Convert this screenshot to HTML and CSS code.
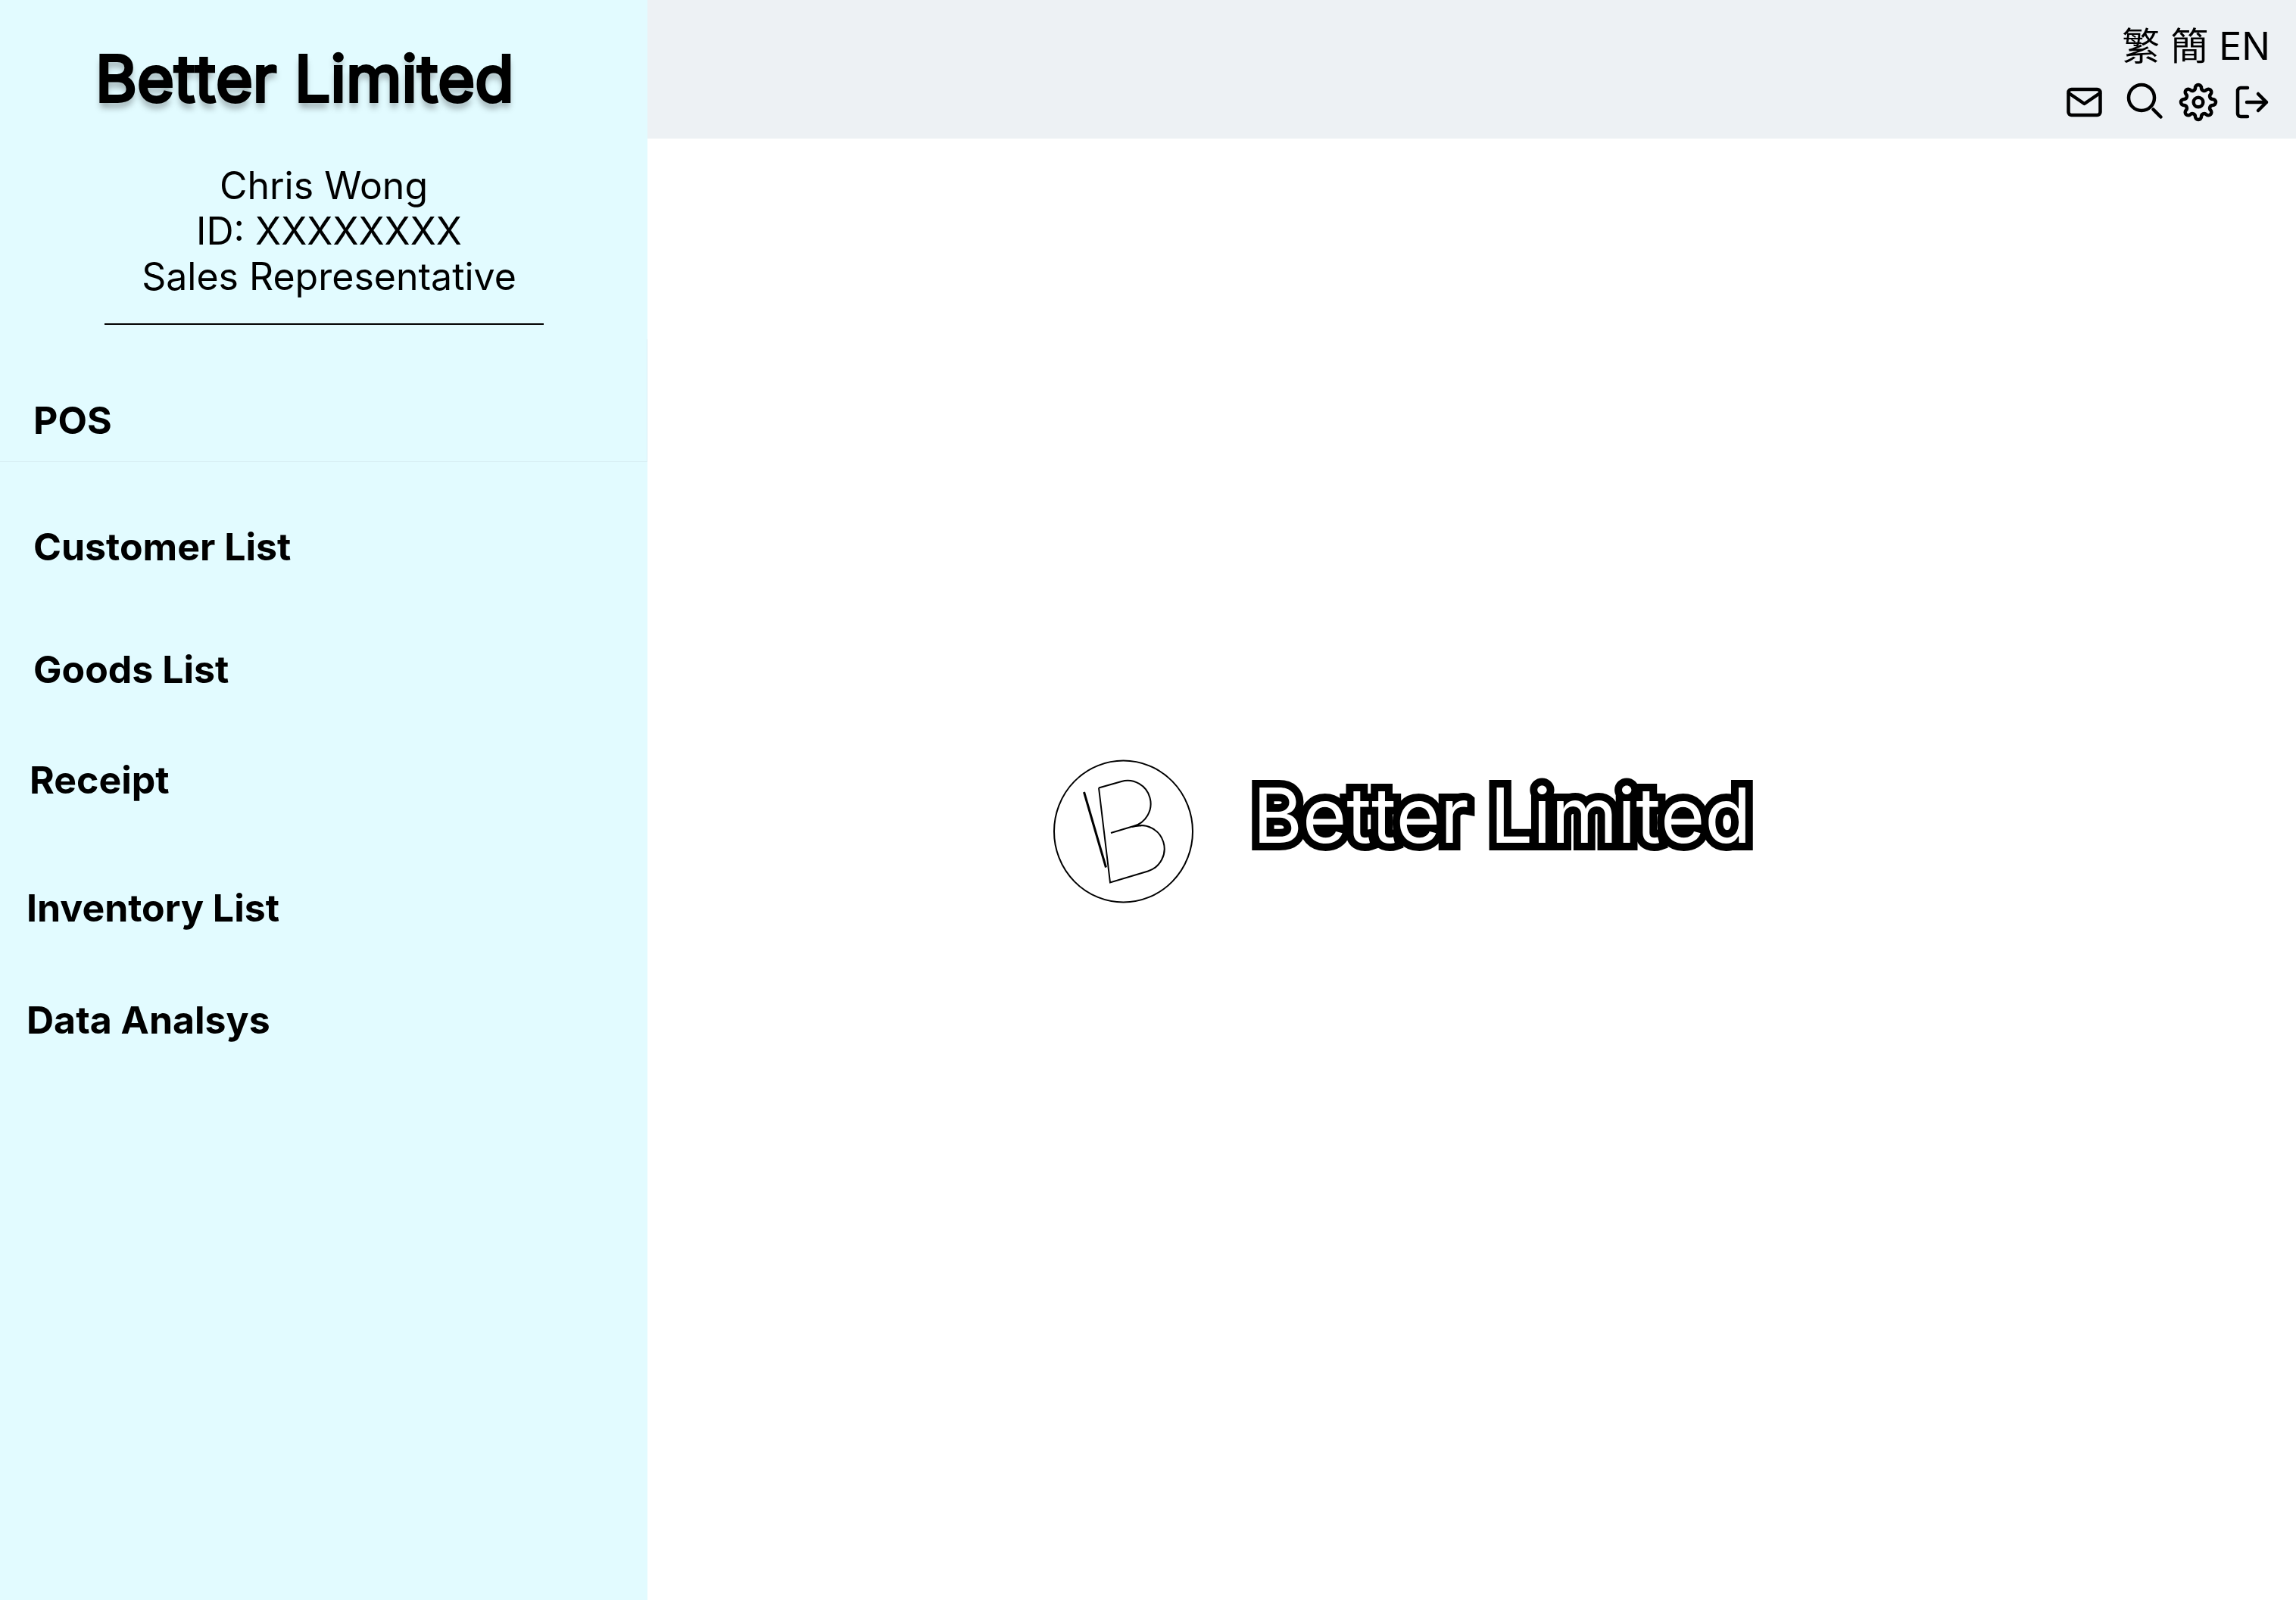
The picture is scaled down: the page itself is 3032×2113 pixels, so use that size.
FILE: index.html
```html
<!DOCTYPE html>
<html lang="en">
<head>
<meta charset="utf-8">
<title>Better Limited</title>
<link rel="stylesheet" href="styles.css">
</head>
<body>
<div class="app">
  <aside class="sidebar">
    <h1 class="brand">Better Limited</h1>
    <p class="profile">Chris Wong<br>&nbsp;ID: XXXXXXXX<br>&nbsp;Sales Representative</p>
    <hr class="divider">
    <nav class="menu" aria-label="Main">
      <a class="menu-item is-active" href="#pos">POS</a>
      <a class="menu-item" href="#customers">Customer List</a>
      <a class="menu-item" href="#goods">Goods List</a>
      <a class="menu-item menu-item-mid" href="#receipt">Receipt</a>
      <a class="menu-item menu-item-low" href="#inventory">Inventory List</a>
      <a class="menu-item menu-item-low" href="#data">Data Analsys</a>
    </nav>
  </aside>
  <div class="page">
    <header class="topbar">
      <div class="languages">
        <a href="#zh-hant" lang="zh-Hant">繁</a>
        <a href="#zh-hans" lang="zh-Hant">簡</a>
        <a href="#en">EN</a>
      </div>
      <div class="tools">
        <button class="tool tool-wide" type="button" aria-label="Mail">
          <svg viewBox="0 0 56 50" stroke-width="4.500"><rect x="5.500" y="8" width="42" height="34" rx="4"/><path d="M6 13 26.500 27 47 13"/></svg>
        </button>
        <button class="tool" type="button" aria-label="Search">
          <svg viewBox="0 0 48 50" stroke-width="4.500"><circle cx="22" cy="19" r="17"/><path d="M37.500 34.500 47.500 44.500"/></svg>
        </button>
        <button class="tool" type="button" aria-label="Settings">
          <svg viewBox="0 0 48 50" stroke-width="4.500">
            <g transform="translate(25 25)">
              <circle r="6.300"/>
              <path d="M-4-19A4 4 0 0 1 4-19A3.870 3.870 0 0 0 10.610-16.260A4 4 0 0 1 16.260-10.610A3.870 3.870 0 0 0 19-4A4 4 0 0 1 19 4A3.870 3.870 0 0 0 16.260 10.610A4 4 0 0 1 10.610 16.260A3.870 3.870 0 0 0 4 19A4 4 0 0 1-4 19A3.870 3.870 0 0 0-10.610 16.260A4 4 0 0 1-16.260 10.610A3.870 3.870 0 0 0-19 4A4 4 0 0 1-19-4A3.870 3.870 0 0 0-16.260-10.610A4 4 0 0 1-10.610-16.260A3.870 3.870 0 0 0-4-19Z"/>
            </g>
          </svg>
        </button>
        <button class="tool" type="button" aria-label="Log out">
          <svg viewBox="0 0 48 50" stroke-width="4.500"><path d="M18 6H9a4 4 0 0 0-4 4v30a4 4 0 0 0 4 4h9M17 25h26M32 14l11 11-11 11"/></svg>
        </button>
      </div>
    </header>
    <main class="welcome">
      <div class="banner">
        <svg class="logo" viewBox="0 0 186 190" aria-hidden="true">
          <ellipse cx="92.500" cy="95" rx="91.500" ry="93.500"/>
          <path d="M60 37.500 75 162.500 125 147.500A30.300 30.300 0 0 0 106.500 88.500M76 97 106 88A30 30 0 0 0 90 29L60 37.500M104 89Q110 87 116 87.500"/>
          <path class="logo-slash" d="M40.500 43 69.500 142.500"/>
        </svg>
        <p class="wordmark">Better Limited</p>
      </div>
    </main>
  </div>
</div>
</body>
</html>
```
FILE: styles.css
```css
* {
  box-sizing: border-box;
}

body {
  margin: 0;
  background: #fff;
  color: #000;
  font-family: Inter, "Noto Sans CJK TC", sans-serif;
  font-size: 50px;
  line-height: 60px;
}

a {
  color: inherit;
  text-decoration: none;
}

.app {
  display: grid;
  grid-template-columns: 855px 1fr;
  min-height: 100vh;
}

.sidebar {
  background: #e2fbff;
}

.brand {
  margin: 0;
  padding: 52px 0 0 126px;
  font-size: 84px;
  font-weight: 400;
  font-kerning: none;
  line-height: 104px;
  -webkit-text-stroke: 4px #000;
  text-shadow: 0 8px 8px rgba(0, 0, 0, 0.35);
}

.profile {
  margin: 59px 0 0;
  text-align: center;
}

.divider {
  width: 580px;
  height: 2px;
  margin: 32px auto 0;
  border: 0;
  background: #000;
}

.menu {
  display: grid;
  grid-template-rows: 162px 167px 162px 146px 169px 148px;
  margin-top: 19px;
}

.menu-item {
  display: flex;
  align-items: flex-end;
  padding: 0 44px 25px;
  font-weight: 700;
}

.menu-item-mid {
  padding-left: 39px;
}

.menu-item-low {
  padding-left: 35px;
}

.is-active {
  box-shadow: inset -1px -1px 0 #d9f0f5;
}

.page {
  display: flex;
  flex-direction: column;
}

.topbar {
  display: flex;
  flex-direction: column;
  align-items: flex-end;
  gap: 19px;
  height: 183px;
  padding: 31px 34px 0 0;
  background: #edf1f4;
}

.languages {
  display: flex;
  gap: 14px;
}

.tools {
  display: flex;
  gap: 24px;
}

.tool {
  width: 48px;
  height: 50px;
  padding: 0;
  border: 0;
  background: none;
}

.tool-wide {
  width: 56px;
}

.tool svg {
  display: block;
  width: 100%;
  height: 50px;
  overflow: visible;
  fill: none;
  stroke: #000;
  stroke-linecap: round;
  stroke-linejoin: round;
}

.welcome {
  display: flex;
  justify-content: center;
  padding: 732px 32px 0;
}

.banner {
  display: flex;
  align-items: flex-start;
  gap: 78px;
  width: 1302px;
  padding: 88px 98px;
}

.logo {
  width: 186px;
  height: 190px;
  fill: none;
  stroke: #000;
  stroke-width: 2px;
}

.logo-slash {
  stroke-width: 3px;
}

.wordmark {
  margin: 14px 0 0;
  color: #fff;
  font-size: 100px;
  font-kerning: none;
  line-height: 120px;
  white-space: nowrap;
  -webkit-text-stroke: 20px #000;
  paint-order: stroke fill;
}
```
